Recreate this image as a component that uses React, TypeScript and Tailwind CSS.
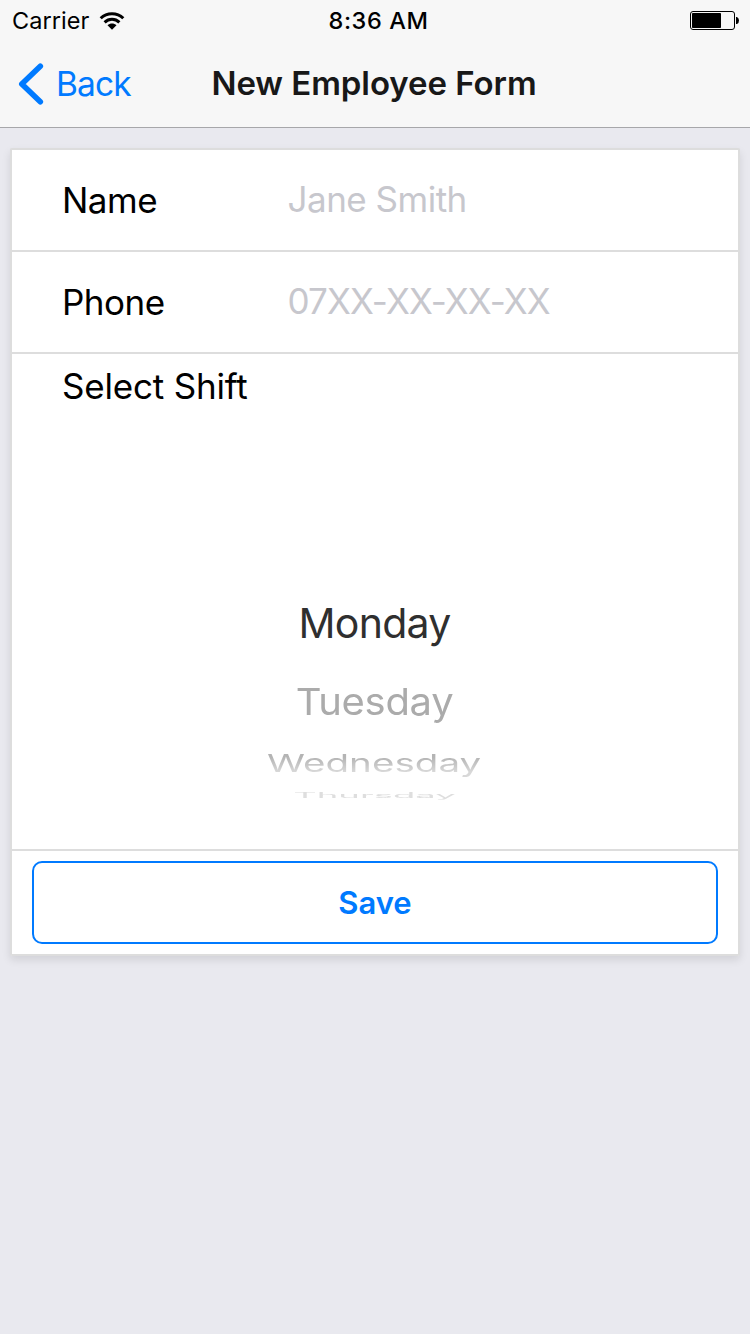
import React from "react";

function WifiIcon() {
  return (
    <svg className="ml-[10px] h-[18px] w-[26px]" viewBox="0 0 26 18" fill="none" stroke="#000" strokeWidth="3">
      <path d="M1.7 6.3 C8 0.1 18 0.1 24.3 6.3" />
      <path d="M5.6 10.3 C9.9 6.2 16.1 6.2 20.4 10.3" />
      <path d="M8.5 13.3 C11 11 15 11 17.5 13.3 L13 17.8 Z" fill="#000" stroke="none" />
    </svg>
  );
}

function BatteryIcon() {
  return (
    <svg className="h-[20px] w-[50px]" viewBox="0 0 50 20">
      <rect x="0.5" y="0.5" width="44" height="18" rx="2.5" fill="none" stroke="#000" />
      <rect x="2" y="2" width="29" height="15" rx="0.8" fill="#000" />
      <path d="M46 6 h1 q2 1 2 3.5 t-2 3.5 h-1 z" fill="#000" />
    </svg>
  );
}

function StatusBar() {
  return (
    <div className="grid h-10 grid-cols-3 items-center pt-[1px] leading-10 text-black">
      <div className="flex items-center pl-3">
        <span className="text-[23.5px] tracking-[0.05px]">Carrier</span>
        <WifiIcon />
      </div>
      <div className="pl-[7px] text-center text-[23.5px] font-medium tracking-[0.6px]">8:36 AM</div>
      <div className="flex justify-end pr-[10px]">
        <BatteryIcon />
      </div>
    </div>
  );
}

function NavBar() {
  return (
    <div className="grid h-[87px] grid-cols-[200px_1fr_200px] items-center">
      <button className="flex items-center pl-[18px] text-[#007aff]">
        <svg className="h-[42px] w-[26px]" viewBox="0 0 26 42" fill="none" stroke="currentColor" strokeWidth="5.6" strokeLinecap="round">
          <path d="M22.3 3.2 L3.8 21 L22.3 38.8" strokeLinejoin="round" />
        </svg>
        <span className="pt-[2px] pl-[12px] text-[33.5px] tracking-[-0.9px]">Back</span>
      </button>
      <h1 className="-ml-[2px] text-center text-[33px] font-semibold tracking-[-0.06px] whitespace-nowrap text-[#181818]">
        New Employee Form
      </h1>
    </div>
  );
}

function Field({
  label,
  placeholder,
  tracking,
}: {
  label: string;
  placeholder: string;
  tracking: string;
}) {
  return (
    <label className="flex h-[102px] items-center border-b-2 border-[#ddd] pl-[50px]">
      <span className="w-[225.5px] text-[35px] tracking-[-0.5px] text-black">{label}</span>
      <input
        className={`min-w-0 flex-1 bg-transparent pb-[2px] text-[35px] outline-none placeholder:text-[#c7c7cd] ${tracking}`}
        placeholder={placeholder}
      />
    </label>
  );
}

function ShiftPicker() {
  return (
    <div className="flex h-[497px] flex-col border-b-2 border-[#ddd]">
      <span className="h-[65px] pl-[50px] text-[35px] leading-[65px] tracking-[-0.2px] text-black">Select Shift</span>
      <div className="flex flex-1 flex-col items-center pt-[163px] pr-[1px] whitespace-nowrap">
        <div className="h-[83px] text-[41px] leading-[82px] tracking-[-0.75px] text-[#2f2f2f]">Monday</div>
        <div className="h-[74px] origin-center scale-y-[0.93] text-[40px] leading-[74px] tracking-[-0.3px] text-[#ababab]">Tuesday</div>
        <div className="h-[48px] origin-center scale-x-[0.965] scale-y-[0.61] bg-gradient-to-b from-[#b4b4b4] from-30% to-[#d8d8d8] to-80% bg-clip-text text-[40px] leading-[48px] text-transparent">
          Wednesday
        </div>
        <div className="h-[16px] overflow-hidden">
          <div className="origin-center scale-y-[0.2] text-[36.5px] leading-[17px] text-[#dedede]">Thursday</div>
        </div>
      </div>
    </div>
  );
}

export default function App() {
  return (
    <div className="flex h-[1334px] w-[750px] flex-col bg-[#e9e9ef] font-[Inter,sans-serif]">
      <header className="h-[128px] shrink-0 border-b border-[#a7a7aa] bg-[#f7f7f7]">
        <StatusBar />
        <NavBar />
      </header>
      <main className="mx-[10px] mt-[20px] rounded-[2px] border-2 border-b-0 border-[#ddd] bg-white shadow-[0_4px_8px_rgba(0,0,0,0.1)]">
        <Field label="Name" placeholder="Jane Smith" tracking="tracking-[-0.5px]" />
        <Field label="Phone" placeholder="07XX-XX-XX-XX" tracking="tracking-[-0.85px]" />
        <ShiftPicker />
        <div className="h-[105px] border-b-2 border-[#ddd] px-5 pt-[10px]">
          <button className="h-[83px] w-full rounded-[10px] border-2 border-[#007aff] bg-white pt-[2px] text-[31px] font-semibold text-[#007aff]">
            Save
          </button>
        </div>
      </main>
    </div>
  );
}
